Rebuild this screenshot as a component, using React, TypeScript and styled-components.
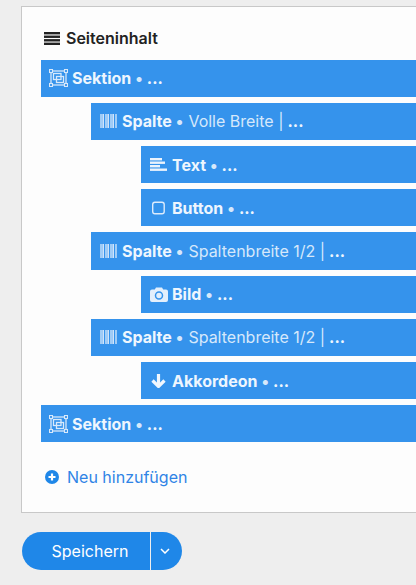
import React from 'react';
import styled, {createGlobalStyle} from 'styled-components';

const GlobalStyle = createGlobalStyle`
  html, body {
    margin: 0;
    padding: 0;
    height: 100%;
    overflow: hidden;
    background: #eeeeee;
    font-family: Inter, "Liberation Sans", sans-serif;
  }
`;

type IconName = 'section' | 'column' | 'text' | 'button' | 'camera' | 'down';

interface Item {
  level: number;
  icon: IconName;
  name: string;
  detail?: string;
}

const ITEMS: Item[] = [
  {level: 0, icon: 'section', name: 'Sektion'},
  {level: 1, icon: 'column', name: 'Spalte', detail: 'Volle Breite |'},
  {level: 2, icon: 'text', name: 'Text'},
  {level: 2, icon: 'button', name: 'Button'},
  {level: 1, icon: 'column', name: 'Spalte', detail: 'Spaltenbreite 1/2 |'},
  {level: 2, icon: 'camera', name: 'Bild'},
  {level: 1, icon: 'column', name: 'Spalte', detail: 'Spaltenbreite 1/2 |'},
  {level: 2, icon: 'down', name: 'Akkordeon'},
  {level: 0, icon: 'section', name: 'Sektion'},
];

const RowIcon = ({name}: {name: IconName}) => {
  if (name === 'section') {
    return (
      <svg width="19" height="18" viewBox="0 0 19 18" fill="none" stroke="#d8e9fb" strokeWidth="1.3">
        <rect x="2" y="2" width="15" height="14" />
        <rect x="4.5" y="4.5" width="7.5" height="6" />
        <rect x="7.5" y="7.5" width="7" height="6" />
        <g fill="#3593ec" strokeWidth="1.1">
          <rect x="0.5" y="0.5" width="3" height="3" />
          <rect x="15.5" y="0.5" width="3" height="3" />
          <rect x="0.5" y="14.5" width="3" height="3" />
          <rect x="15.5" y="14.5" width="3" height="3" />
        </g>
      </svg>
    );
  }
  if (name === 'column') {
    return (
      <svg width="17" height="14" viewBox="0 0 17 14" fill="#cfe4fb">
        <rect x="0" width="2.500" height="14" opacity="0.7" />
        <rect x="2.500" width="1.500" height="14" />
        <rect x="5" width="2.500" height="14" opacity="0.7" />
        <rect x="7.500" width="1.500" height="14" />
        <rect x="10" width="2.500" height="14" opacity="0.7" />
        <rect x="12.500" width="1.500" height="14" />
        <rect x="15" width="2" height="14" opacity="0.7" />
      </svg>
    );
  }
  if (name === 'text') {
    return (
      <svg width="17" height="13" viewBox="0 0 17 13" fill="#eaf3fd">
        <rect y="0" width="12" height="2.400" />
        <rect y="3.500" width="15" height="2.400" />
        <rect y="7" width="10" height="2.400" />
        <rect y="10.500" width="17" height="2.400" />
      </svg>
    );
  }
  if (name === 'button') {
    return (
      <svg width="15" height="14" viewBox="0 0 15 14" fill="none" stroke="#dcebfc" strokeWidth="1.400">
        <rect x="1.700" y="1.200" width="11.500" height="11.500" rx="2.200" />
      </svg>
    );
  }
  if (name === 'camera') {
    return (
      <svg width="18" height="15" viewBox="0 0 18 15">
        <path
          fill="#e3effc"
          d="M6 0.500h6l1.200 2H16a2 2 0 0 1 2 2V13a2 2 0 0 1-2 2H2a2 2 0 0 1-2-2V4.500a2 2 0 0 1 2-2h2.800z"
        />
        <circle cx="9" cy="8.500" r="3.500" fill="none" stroke="#3593ec" strokeWidth="1.500" />
      </svg>
    );
  }
  return (
    <svg width="15" height="14" viewBox="0 0 15 14" fill="none" stroke="#f1f7fe" strokeWidth="3.200">
      <path d="M7.500 0V11" />
      <path d="M1.500 6.500l6 6 6-6" />
    </svg>
  );
};

const App: React.FC = () => {
  return (
    <Page>
      <GlobalStyle />
      <Panel>
        <Heading>
          <svg width="16" height="13" viewBox="0 0 16 13" fill="#222222">
            <rect y="0" width="16" height="2.400" />
            <rect y="3.550" width="16" height="2.400" />
            <rect y="7.100" width="16" height="2.400" />
            <rect y="10.600" width="16" height="2.400" />
          </svg>
          Seiteninhalt
        </Heading>
        <List>
          {ITEMS.map((item, index) => (
            <Row key={index} $level={item.level}>
              <IconBox><RowIcon name={item.icon} /></IconBox>
              <Name>{item.name}</Name>
              <Bullet>•</Bullet>
              {item.detail && <Detail>{item.detail}</Detail>}
              <Dots>...</Dots>
            </Row>
          ))}
        </List>
        <AddLink>
          <svg width="14" height="14" viewBox="0 0 14 14">
            <circle cx="7" cy="7" r="7" fill="#1f87e8" />
            <path d="M7 3.500v7M3.500 7h7" stroke="#ffffff" strokeWidth="2.200" />
          </svg>
          Neu hinzufügen
        </AddLink>
      </Panel>
      <SaveGroup>
        <SaveButton>Speichern</SaveButton>
        <MenuButton>
          <svg width="10" height="6" viewBox="0 0 10 6" fill="none" stroke="#ffffff" strokeWidth="1.500">
            <path d="M1 1l4 4 4-4" />
          </svg>
        </MenuButton>
      </SaveGroup>
    </Page>
  );
};

export default App;

const Page = styled.div`
  width: 416px;
  height: 585px;
  padding: 6px 0 0 21px;
  box-sizing: border-box;
  overflow: hidden;
`;

const Panel = styled.div`
  width: 420px;
  height: 507px;
  box-sizing: border-box;
  padding: 22px 0 0 19px;
  background: #fdfdfd;
  border: 1px solid #c8c8c8;
  border-right: none;
`;

const Heading = styled.div`
  display: flex;
  align-items: center;
  gap: 6px;
  height: 18px;
  margin-left: 3px;
  font-size: 16px;
  font-weight: 600;
  color: #222222;
`;

const List = styled.div`
  display: flex;
  flex-direction: column;
  gap: 6px;
  margin-top: 12.6px;
`;

const Row = styled.div<{$level: number}>`
  display: flex;
  align-items: center;
  height: 37.2px;
  margin-left: ${props => props.$level * 50}px;
  padding-left: 8px;
  background: #3593ec;
  color: #d6e8fb;
  font-size: 16px;
  white-space: nowrap;
`;

const IconBox = styled.span`
  display: flex;
  align-items: center;
  justify-content: center;
  width: 19px;
  margin-right: 4px;
`;

const Name = styled.span`
  font-weight: 700;
  color: #eef6fe;
`;

const Bullet = styled.span`
  margin-left: 4px;
  font-weight: 700;
`;

const Detail = styled.span`
  margin-left: 5px;
`;

const Dots = styled.span`
  margin-left: 4px;
  font-weight: 700;
  color: #eef6fe;
`;

const AddLink = styled.div`
  display: flex;
  align-items: center;
  gap: 8px;
  height: 20px;
  margin: 24.7px 0 0 4px;
  font-size: 16px;
  color: #2f84e6;
`;

const SaveGroup = styled.div`
  display: flex;
  margin: 19px 0 0 1px;
  height: 38px;
`;

const SaveButton = styled.button`
  width: 128px;
  padding: 0 0 0 8px;
  border: none;
  border-radius: 19px 0 0 19px;
  background: #1f87e8;
  color: #ffffff;
  font-family: inherit;
  font-size: 16px;
`;

const MenuButton = styled.button`
  display: flex;
  align-items: center;
  justify-content: center;
  width: 31px;
  margin-left: 1px;
  padding: 0 3px 0 0;
  border: none;
  border-radius: 0 19px 19px 0;
  background: #1f87e8;
`;
